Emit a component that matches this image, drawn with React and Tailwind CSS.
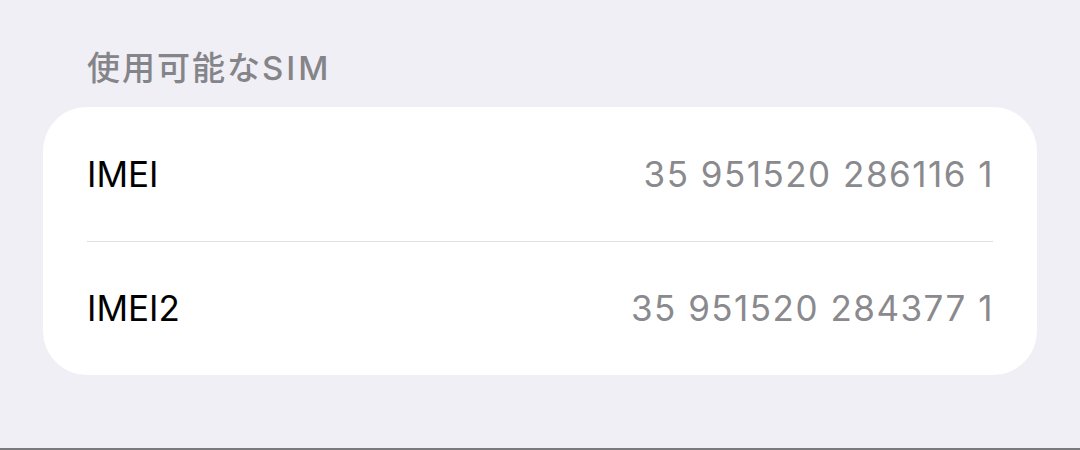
import React from 'react';

const rows = [
  { label: 'IMEI', value: '35 951520 286116 1' },
  { label: 'IMEI2', value: '35 951520 284377 1' },
];

const App = () => {
  return (
    <div
      className="w-[1080px] h-[450px] bg-[#f0eff5] border-b-2 border-[#7a7a7c] flex flex-col"
      style={{ fontFamily: 'Inter, "Noto Sans CJK JP", sans-serif' }}
    >
      <h2 className="pl-[87px] pt-[48px] h-[107px] text-[33px] leading-[40px] font-medium tracking-[2px] text-[#858589]">
        使用可能な<span className="tracking-[3px]">SIM</span>
      </h2>
      <div className="mx-[43px] h-[268px] bg-white rounded-[44px] px-[44px] flex flex-col">
        {rows.map((row, i) => (
          <div
            key={row.label}
            className={`flex-1 flex items-center justify-between ${i === 0 ? 'border-b border-[#e0e0e3]' : ''}`}
          >
            <span className="text-[35px] text-black">{row.label}</span>
            <span className="text-[35px] tracking-[1.5px] mr-[-1px] text-[#8a8a8e]">{row.value}</span>
          </div>
        ))}
      </div>
    </div>
  );
};

export default App;
